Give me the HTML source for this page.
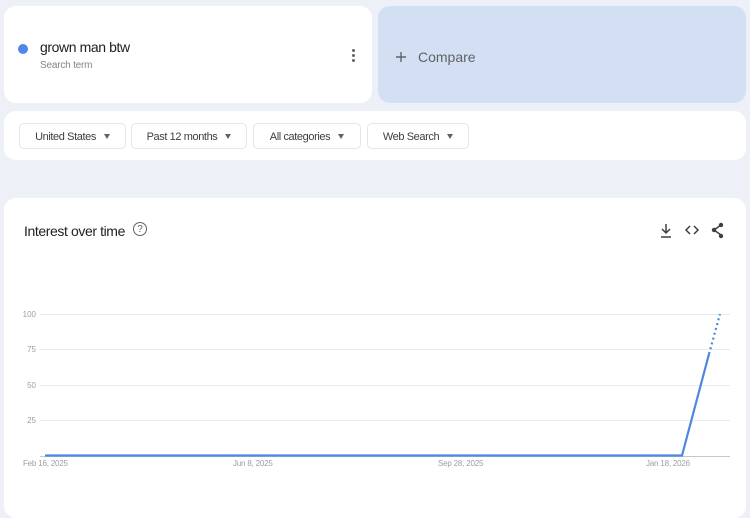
<!DOCTYPE html>
<html><head><style>
body{margin:0;width:750px;height:500px;background:#edf1f7;font-family:"Liberation Sans",sans-serif;position:relative;overflow:hidden}
.c{position:absolute;background:#fff;border-radius:12px}
.chip{position:absolute;top:123px;height:26px;border:1px solid #e3e6ea;border-radius:5px;font-size:11px;color:#3c4043;line-height:26px;text-align:center;box-sizing:border-box;letter-spacing:-0.4px}
.chip i{display:inline-block;width:0;height:0;border-left:3px solid transparent;border-right:3px solid transparent;border-top:5px solid #5f6368;margin-left:8px;vertical-align:1px}
.yl{position:absolute;left:20px;font-size:8px;color:#9aa0a6;width:16px;text-align:right}
.xl{position:absolute;top:459px;font-size:8px;color:#9aa0a6;letter-spacing:-0.2px}
</style></head><body>
<div class="c" style="left:4px;top:6px;width:368px;height:97px">
 <div style="position:absolute;left:14px;top:38px;width:10px;height:10px;border-radius:50%;background:#4f86ec"></div>
 <div style="position:absolute;left:36px;top:33px;font-size:14px;color:#202124;letter-spacing:-0.4px">grown man btw</div>
 <div style="position:absolute;left:36px;top:54px;font-size:10px;color:#80868b;letter-spacing:-0.2px">Search term</div>
 <div style="position:absolute;left:348px;top:43px;width:3px">
  <div style="width:3px;height:3px;border-radius:50%;background:#5f6368;margin-bottom:2px"></div>
  <div style="width:3px;height:3px;border-radius:50%;background:#5f6368;margin-bottom:2px"></div>
  <div style="width:3px;height:3px;border-radius:50%;background:#5f6368"></div></div>
</div>
<div class="c" style="left:378px;top:6px;width:368px;height:97px;background:#d3e0f3">
 <svg style="position:absolute;left:17px;top:45px" width="12" height="12"><path d="M6 1v10M1 6h10" stroke="#5f6368" stroke-width="1.4"/></svg>
 <div style="position:absolute;left:40px;top:43px;font-size:14px;color:#5f6368">Compare</div>
</div>
<div class="c" style="left:4px;top:111px;width:742px;height:49px"></div>
<div class="chip" style="left:19px;width:107px">United States<i></i></div>
<div class="chip" style="left:131px;width:116px">Past 12 months<i></i></div>
<div class="chip" style="left:253px;width:108px">All categories<i></i></div>
<div class="chip" style="left:367px;width:102px">Web Search<i></i></div>
<div class="c" style="left:4px;top:198px;width:742px;height:320px">
 <div style="position:absolute;left:20px;top:25px;font-size:14px;color:#202124;letter-spacing:-0.4px">Interest over time</div>
 <div style="position:absolute;left:129px;top:24px;width:12px;height:12px;border:1.3px solid #5f6368;border-radius:50%;font-size:10px;line-height:13px;text-align:center;color:#5f6368">?</div>
</div>
<svg style="position:absolute;left:0;top:0" width="750" height="500">
 <g stroke="#3c4043" stroke-width="1.5" fill="none">
  <path d="M666 224v9M662 229l4 4 4-4M661 237h10"/>
  <path d="M690 226l-4 4 4 4M694 226l4 4-4 4"/>
  <path d="M721 225l-7 5 7 5"/>
 </g>
 <g fill="#3c4043"><circle cx="721" cy="225" r="2.2"/><circle cx="714" cy="230" r="2.2"/><circle cx="721" cy="236" r="2.2"/></g>
 <g stroke="#e8eaed" stroke-width="1">
  <path d="M40 314.5H730M40 349.5H730M40 385.5H730M40 420.5H730"/>
 </g>
 <path d="M40 456.5H730" stroke="#c4c7cc"/>
 <path d="M45 455.5H682L709 354" stroke="#4f86e0" stroke-width="2.2" fill="none"/>
 <path d="M709 354L720 314" stroke="#4f86e0" stroke-width="2.2" stroke-dasharray="2 3" fill="none"/>
</svg>
<div class="yl" style="top:310px">100</div>
<div class="yl" style="top:345px">75</div>
<div class="yl" style="top:381px">50</div>
<div class="yl" style="top:416px">25</div>
<div class="xl" style="left:23px">Feb 16, 2025</div>
<div class="xl" style="left:233px">Jun 8, 2025</div>
<div class="xl" style="left:438px">Sep 28, 2025</div>
<div class="xl" style="left:646px">Jan 18, 2026</div>
</body></html>
